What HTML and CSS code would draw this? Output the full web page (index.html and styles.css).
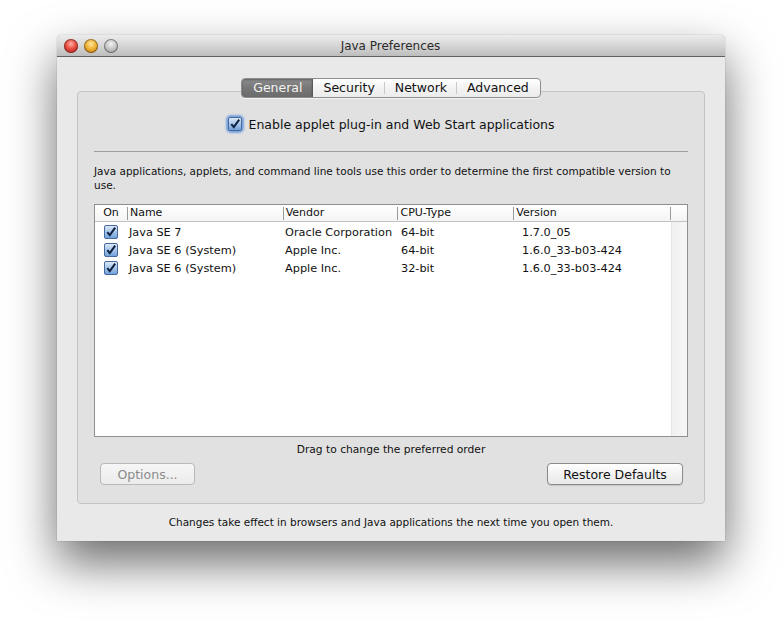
FILE: index.html
```html
<!DOCTYPE html>
<html>
<head>
<meta charset="utf-8">
<title>Java Preferences</title>
<link rel="stylesheet" href="styles.css">
</head>
<body>
<div class="window">
  <div class="titlebar">
    <div class="lights">
      <span class="light red"></span>
      <span class="light yellow"></span>
      <span class="light gray"></span>
    </div>
    <div class="title">Java Preferences</div>
  </div>
  <div class="content">
    <div class="tabs">
      <div class="tab selected">General</div>
      <div class="tab">Security</div>
      <div class="tab">Network</div>
      <div class="tab last">Advanced</div>
    </div>
    <div class="group">
      <label class="enable">
        <span class="cb focus"><svg viewBox="0 0 14 14" width="14" height="14"><use href="#box"/></svg></span>
        <span>Enable applet plug-in and Web Start applications</span>
      </label>
      <div class="sep"></div>
      <p class="desc">Java applications, applets, and command line tools use this order to determine the first compatible version to use.</p>
      <div class="table">
        <div class="thead">
          <div class="th c-on">On</div>
          <div class="th c-name">Name</div>
          <div class="th c-vendor">Vendor</div>
          <div class="th c-cpu">CPU-Type</div>
          <div class="th c-ver">Version</div>
          <div class="th c-end"></div>
        </div>
        <div class="tbody">
          <div class="rows">
            <div class="row">
              <div class="td c-on"><span class="cb"><svg viewBox="0 0 14 14" width="14" height="14"><use href="#box"/></svg></span></div>
              <div class="td c-name">Java SE 7</div>
              <div class="td c-vendor">Oracle Corporation</div>
              <div class="td c-cpu">64-bit</div>
              <div class="td c-ver">1.7.0_05</div>
            </div>
            <div class="row">
              <div class="td c-on"><span class="cb"><svg viewBox="0 0 14 14" width="14" height="14"><use href="#box"/></svg></span></div>
              <div class="td c-name">Java SE 6 (System)</div>
              <div class="td c-vendor">Apple Inc.</div>
              <div class="td c-cpu">64-bit</div>
              <div class="td c-ver">1.6.0_33-b03-424</div>
            </div>
            <div class="row">
              <div class="td c-on"><span class="cb"><svg viewBox="0 0 14 14" width="14" height="14"><use href="#box"/></svg></span></div>
              <div class="td c-name">Java SE 6 (System)</div>
              <div class="td c-vendor">Apple Inc.</div>
              <div class="td c-cpu">32-bit</div>
              <div class="td c-ver">1.6.0_33-b03-424</div>
            </div>
          </div>
          <div class="track"></div>
        </div>
      </div>
      <p class="hint">Drag to change the preferred order</p>
      <div class="buttons">
        <button class="btn disabled">Options...</button>
        <button class="btn restore">Restore Defaults</button>
      </div>
    </div>
    <p class="footer">Changes take effect in browsers and Java applications the next time you open them.</p>
  </div>
</div>
<svg class="defs" width="0" height="0">
  <defs>
    <linearGradient id="g2" x1="0" y1="0" x2="0" y2="1"><stop offset="0" stop-color="#dfeaf8"/><stop offset="0.5" stop-color="#a6c6ea"/><stop offset="1" stop-color="#6b9fd9"/></linearGradient>
    <g id="box"><rect x="0.5" y="0.5" width="13" height="13" rx="1.5" fill="url(#g2)" stroke="#47689a"/><path d="M3.3 7.2 L5.8 10.2 L11.2 2.6" fill="none" stroke="#0f2140" stroke-width="2"/></g>
  </defs>
</svg>
</body>
</html>
```

FILE: styles.css
```css
html, body {
  margin: 0;
  padding: 0;
  background: #ffffff;
}
body {
  width: 782px;
  height: 620px;
  overflow: hidden;
  font-family: "DejaVu Sans", "Liberation Sans", sans-serif;
  color: #111;
}
.defs {
  display: block;
  width: 0;
  height: 0;
}
.window {
  margin: 35px 0 0 57px;
  width: 668px;
  height: 506px;
  background: #e9e9e9;
  border-radius: 5px 5px 0 0;
  box-shadow: 0 22px 48px rgba(0, 0, 0, 0.58), 0 0 1px rgba(0,0,0,0.5);
  display: flex;
  flex-direction: column;
}
.titlebar {
  height: 21px;
  border-bottom: 1px solid #606060;
  border-radius: 5px 5px 0 0;
  background: linear-gradient(#ececec, #d6d6d6 50%, #bdbdbd);
  display: flex;
  align-items: center;
}
.lights {
  display: flex;
  gap: 6px;
  padding-left: 7px;
  width: 60px;
}
.light {
  width: 14px;
  height: 14px;
  border-radius: 50%;
  box-shadow: inset 0 0 0 1px rgba(0,0,0,0.35);
}
.light.red { background: radial-gradient(circle at 50% 35%, #ffb0a8 0, #e84a3e 45%, #a8201a 100%); }
.light.yellow { background: radial-gradient(circle at 50% 35%, #ffe6a0 0, #eeb232 45%, #b06c10 100%); }
.light.gray { background: radial-gradient(circle at 50% 35%, #f2f2f2 0, #c6c6c6 45%, #8c8c8c 100%); }
.title {
  flex: 1;
  text-align: center;
  font-size: 12px;
  color: #2a2a2a;
  margin-right: 68px;
  padding-top: 1px;
}
.content {
  padding: 21px 20px 0;
  display: flex;
  flex-direction: column;
}
.tabs {
  align-self: center;
  display: flex;
  height: 18px;
  border: 1px solid #8e8e8e;
  border-radius: 4px;
  background: linear-gradient(#ffffff, #f3f3f3 50%, #ececec);
  position: relative;
  z-index: 1;
  box-shadow: 0 1px 0 rgba(255,255,255,0.6);
}
.tab {
  font-size: 12.5px;
  line-height: 18px;
  padding: 0 10px;
  color: #111;
  background: linear-gradient(#c9c9c9, #c9c9c9) right 3px / 1px 12px no-repeat;
}
.tab.last { background: none; padding-right: 11px; }
.tab.selected {
  color: #f4f4f4;
  padding-left: 11px;
  background: linear-gradient(#8c8c8c, #777777 50%, #6c6c6c);
  border-radius: 3px 0 0 3px;
  border-right: 1px solid #5a5a5a;
  box-shadow: inset 0 1px 2px rgba(0,0,0,0.3);
}
.group {
  margin-top: -7px;
  height: 411px;
  border: 1px solid #c4c4c4;
  border-radius: 4px;
  background: #e1e1e1;
  padding: 0 16px;
  display: flex;
  flex-direction: column;
}
.enable {
  margin-top: 24px;
  align-self: center;
  display: flex;
  align-items: center;
  gap: 7px;
  font-size: 12.5px;
  height: 16px;
  color: #111;
}
.cb {
  display: inline-flex;
  width: 14px;
  height: 14px;
}
.cb.focus {
  border-radius: 3px;
  box-shadow: 0 0 2px 2px rgba(86, 142, 222, 0.75);
}
.sep {
  margin-top: 19px;
  height: 0;
  border-top: 1px solid #9f9f9f;
}
.desc {
  margin: 12px 0 0;
  font-size: 10.5px;
  line-height: 14px;
  color: #111;
}
.table {
  margin-top: 12px;
  height: 231px;
  border: 1px solid #8f8f8f;
  background: #ffffff;
  display: flex;
  flex-direction: column;
}
.thead {
  display: flex;
  height: 16px;
  border-bottom: 1px solid #c2c2c2;
  background: linear-gradient(#ffffff, #f4f4f4);
}
.th {
  font-size: 11px;
  line-height: 16px;
  padding-left: 3px;
  color: #111;
  background: linear-gradient(#9a9a9a, #9a9a9a) left 2px / 1px 13px no-repeat;
  box-sizing: border-box;
}
.c-on { width: 32px; }
.c-name { width: 156px; }
.c-vendor { width: 115px; }
.c-cpu { width: 116px; }
.c-ver { width: 157px; }
.c-end { width: 17px; }
.th.c-on {
  background: none;
  text-align: center;
  padding-left: 0;
}
.tbody {
  flex: 1;
  display: flex;
}
.rows {
  flex: 1;
  padding-top: 1px;
}
.track {
  width: 16px;
  border-left: 1px solid #e6e6e6;
  background: linear-gradient(90deg, #f0f0f0, #f7f7f7);
}
.row {
  display: flex;
  height: 18px;
  align-items: center;
}
.td {
  font-size: 11.3px;
  box-sizing: border-box;
  padding-left: 2px;
  white-space: nowrap;
}
.td.c-on {
  display: flex;
  justify-content: center;
  padding-left: 0;
}
.td.c-cpu { padding-left: 3px; }
.td.c-ver { padding-left: 8px; }
.hint {
  margin: 6px 0 0;
  text-align: center;
  font-size: 10.7px;
  line-height: 14px;
}
.buttons {
  margin-top: 6px;
  display: flex;
  justify-content: space-between;
  padding: 0 5px 0 6px;
}
.btn {
  height: 22px;
  border-radius: 4px;
  font-family: "DejaVu Sans", "Liberation Sans", sans-serif;
  font-size: 12.5px;
  padding: 0;
  box-sizing: border-box;
}
.btn.disabled {
  width: 95px;
  color: #8a8a8a;
  border: 1px solid #b9b9b9;
  background: linear-gradient(#f6f6f6, #ececec);
}
.btn.restore {
  width: 136px;
  color: #111;
  border: 1px solid #8a8a8a;
  background: linear-gradient(#ffffff, #f2f2f2 50%, #e9e9e9);
  box-shadow: 0 1px 1px rgba(0,0,0,0.12);
}
.footer {
  margin: 11px 0 0;
  text-align: center;
  font-size: 10.5px;
  line-height: 14px;
}
```
